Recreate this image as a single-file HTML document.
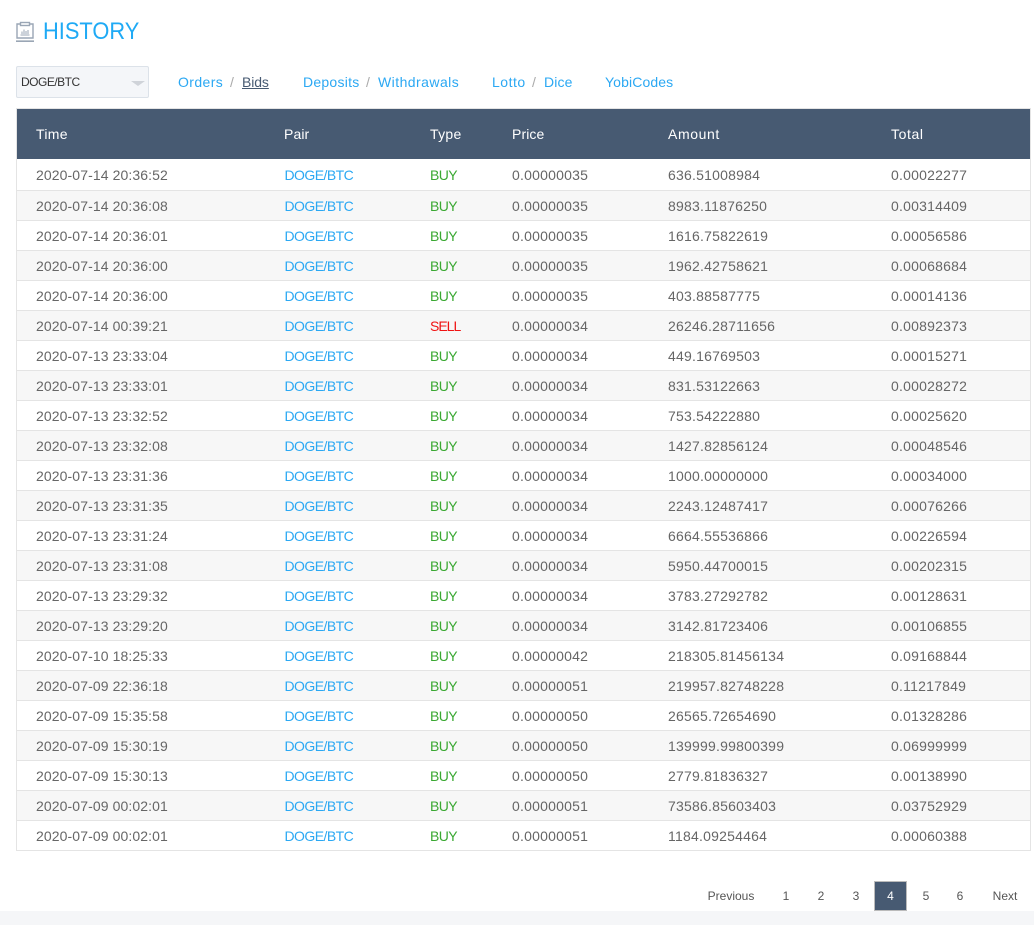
<!DOCTYPE html>
<html><head><meta charset="utf-8"><style>
html,body{margin:0;padding:0;background:#fff}
body{width:1034px;height:925px;position:relative;overflow:hidden;font-family:"Liberation Sans",sans-serif;font-size:14px;color:#666}
a{color:#2ba8f3;text-decoration:none}
.abs{position:absolute;white-space:nowrap}
#foot{position:absolute;left:0;top:911px;width:1034px;height:14px;background:#f5f6f8}
#t{position:absolute;left:16px;top:108px;width:1015px;border-collapse:collapse;table-layout:fixed;border:1px solid #e4e4e4}
#t th{background:#475a72;color:#fff;font-weight:normal;height:50px;padding:0 0 0 19.500px;text-align:left;letter-spacing:.3px}
#t th:first-child{padding-left:19px}
#t td{height:27px;padding:2px 0 0 19.500px;border-bottom:1px solid #e4e4e4;line-height:26px;letter-spacing:.22px;white-space:nowrap;vertical-align:top}
#t tr:nth-child(even) td{background:#f7f7f7}
#t tr:first-child td{height:28px;padding-top:3px}
#t td:nth-child(1){letter-spacing:.1px;padding-left:19px}
#t td:nth-child(2){color:#2ba8f3;letter-spacing:-.55px;padding-left:20px}
#t td.b{color:#3aa832;letter-spacing:-.6px}
#t td.s{color:#f01414;letter-spacing:-1px}
.p{position:absolute;top:881px;height:30px;line-height:31px;font-size:12px;color:#555;text-align:center}
.n{line-height:17px;top:74px}
</style></head><body>
<svg class="abs" style="left:16px;top:21px" width="18" height="21" viewBox="0 0 18 21" fill="none" stroke="#9aa6b5" stroke-width="1.4"><path d="M5 3H1v14h16V3h-4"/><rect x="4.500" y="1.500" width="9" height="3"/><path d="M0 20.200h18" stroke-width="1.600"/><path d="M4.500 14h9M6 13v-2.500M8 13V8.500M10 13v-3M12 13V9" stroke-width="1"/></svg>
<div class="abs" style="left:43px;top:17px;font-size:24px;line-height:30px;color:#1faaf5;transform:scaleX(.91);transform-origin:0 0">HISTORY</div>
<div class="abs" style="left:16px;top:66px;width:131px;height:30px;border:1px solid #dce2e9;border-radius:2px;background:#f4f6f9;color:#333;font-size:12px;line-height:31px;text-indent:4px;letter-spacing:-.5px">DOGE/BTC</div>
<div class="abs" style="left:131px;top:81px;width:0;height:0;border-left:7px solid transparent;border-right:7px solid transparent;border-top:5px solid #cfd3d9"></div>
<a class="abs n" style="left:178px;letter-spacing:.4px">Orders</a>
<span class="abs n" style="left:230px;color:#aaa">/</span>
<a class="abs n" style="left:242px;color:#475a72;text-decoration:underline;letter-spacing:-.1px">Bids</a>
<a class="abs n" style="left:303px;letter-spacing:.25px">Deposits</a>
<span class="abs n" style="left:366px;color:#aaa">/</span>
<a class="abs n" style="left:378px;letter-spacing:.45px">Withdrawals</a>
<a class="abs n" style="left:492px;letter-spacing:.5px">Lotto</a>
<span class="abs n" style="left:532px;color:#aaa">/</span>
<a class="abs n" style="left:544px;letter-spacing:.15px">Dice</a>
<a class="abs n" style="left:605px;letter-spacing:.12px">YobiCodes</a>
<table id="t">
<colgroup><col style="width:248px"><col style="width:146px"><col style="width:82px"><col style="width:156px"><col style="width:223px"><col></colgroup>
<thead><tr><th>Time</th><th style="letter-spacing:.1px">Pair</th><th>Type</th><th style="letter-spacing:.1px">Price</th><th style="letter-spacing:.6px">Amount</th><th style="letter-spacing:.6px">Total</th></tr></thead>
<tbody>
<tr><td>2020-07-14 20:36:52</td><td>DOGE/BTC</td><td class="b">BUY</td><td>0.00000035</td><td>636.51008984</td><td>0.00022277</td></tr>
<tr><td>2020-07-14 20:36:08</td><td>DOGE/BTC</td><td class="b">BUY</td><td>0.00000035</td><td>8983.11876250</td><td>0.00314409</td></tr>
<tr><td>2020-07-14 20:36:01</td><td>DOGE/BTC</td><td class="b">BUY</td><td>0.00000035</td><td>1616.75822619</td><td>0.00056586</td></tr>
<tr><td>2020-07-14 20:36:00</td><td>DOGE/BTC</td><td class="b">BUY</td><td>0.00000035</td><td>1962.42758621</td><td>0.00068684</td></tr>
<tr><td>2020-07-14 20:36:00</td><td>DOGE/BTC</td><td class="b">BUY</td><td>0.00000035</td><td>403.88587775</td><td>0.00014136</td></tr>
<tr><td>2020-07-14 00:39:21</td><td>DOGE/BTC</td><td class="s">SELL</td><td>0.00000034</td><td>26246.28711656</td><td>0.00892373</td></tr>
<tr><td>2020-07-13 23:33:04</td><td>DOGE/BTC</td><td class="b">BUY</td><td>0.00000034</td><td>449.16769503</td><td>0.00015271</td></tr>
<tr><td>2020-07-13 23:33:01</td><td>DOGE/BTC</td><td class="b">BUY</td><td>0.00000034</td><td>831.53122663</td><td>0.00028272</td></tr>
<tr><td>2020-07-13 23:32:52</td><td>DOGE/BTC</td><td class="b">BUY</td><td>0.00000034</td><td>753.54222880</td><td>0.00025620</td></tr>
<tr><td>2020-07-13 23:32:08</td><td>DOGE/BTC</td><td class="b">BUY</td><td>0.00000034</td><td>1427.82856124</td><td>0.00048546</td></tr>
<tr><td>2020-07-13 23:31:36</td><td>DOGE/BTC</td><td class="b">BUY</td><td>0.00000034</td><td>1000.00000000</td><td>0.00034000</td></tr>
<tr><td>2020-07-13 23:31:35</td><td>DOGE/BTC</td><td class="b">BUY</td><td>0.00000034</td><td>2243.12487417</td><td>0.00076266</td></tr>
<tr><td>2020-07-13 23:31:24</td><td>DOGE/BTC</td><td class="b">BUY</td><td>0.00000034</td><td>6664.55536866</td><td>0.00226594</td></tr>
<tr><td>2020-07-13 23:31:08</td><td>DOGE/BTC</td><td class="b">BUY</td><td>0.00000034</td><td>5950.44700015</td><td>0.00202315</td></tr>
<tr><td>2020-07-13 23:29:32</td><td>DOGE/BTC</td><td class="b">BUY</td><td>0.00000034</td><td>3783.27292782</td><td>0.00128631</td></tr>
<tr><td>2020-07-13 23:29:20</td><td>DOGE/BTC</td><td class="b">BUY</td><td>0.00000034</td><td>3142.81723406</td><td>0.00106855</td></tr>
<tr><td>2020-07-10 18:25:33</td><td>DOGE/BTC</td><td class="b">BUY</td><td>0.00000042</td><td>218305.81456134</td><td>0.09168844</td></tr>
<tr><td>2020-07-09 22:36:18</td><td>DOGE/BTC</td><td class="b">BUY</td><td>0.00000051</td><td>219957.82748228</td><td>0.11217849</td></tr>
<tr><td>2020-07-09 15:35:58</td><td>DOGE/BTC</td><td class="b">BUY</td><td>0.00000050</td><td>26565.72654690</td><td>0.01328286</td></tr>
<tr><td>2020-07-09 15:30:19</td><td>DOGE/BTC</td><td class="b">BUY</td><td>0.00000050</td><td>139999.99800399</td><td>0.06999999</td></tr>
<tr><td>2020-07-09 15:30:13</td><td>DOGE/BTC</td><td class="b">BUY</td><td>0.00000050</td><td>2779.81836327</td><td>0.00138990</td></tr>
<tr><td>2020-07-09 00:02:01</td><td>DOGE/BTC</td><td class="b">BUY</td><td>0.00000051</td><td>73586.85603403</td><td>0.03752929</td></tr>
<tr><td>2020-07-09 00:02:01</td><td>DOGE/BTC</td><td class="b">BUY</td><td>0.00000051</td><td>1184.09254464</td><td>0.00060388</td></tr>
</tbody></table>
<div id="foot"></div>
<div class="p" style="left:700px;width:62px">Previous</div>
<div class="p" style="left:771px;width:30px">1</div>
<div class="p" style="left:806px;width:30px">2</div>
<div class="p" style="left:841px;width:30px">3</div>
<div class="p" style="left:874px;top:881px;width:31px;height:28px;line-height:29px;background:#475a72;color:#fff;border:1px solid #bbb;">4</div>
<div class="p" style="left:911px;width:30px">5</div>
<div class="p" style="left:945px;width:30px">6</div>
<div class="p" style="left:985px;width:40px">Next</div>
</body></html>
